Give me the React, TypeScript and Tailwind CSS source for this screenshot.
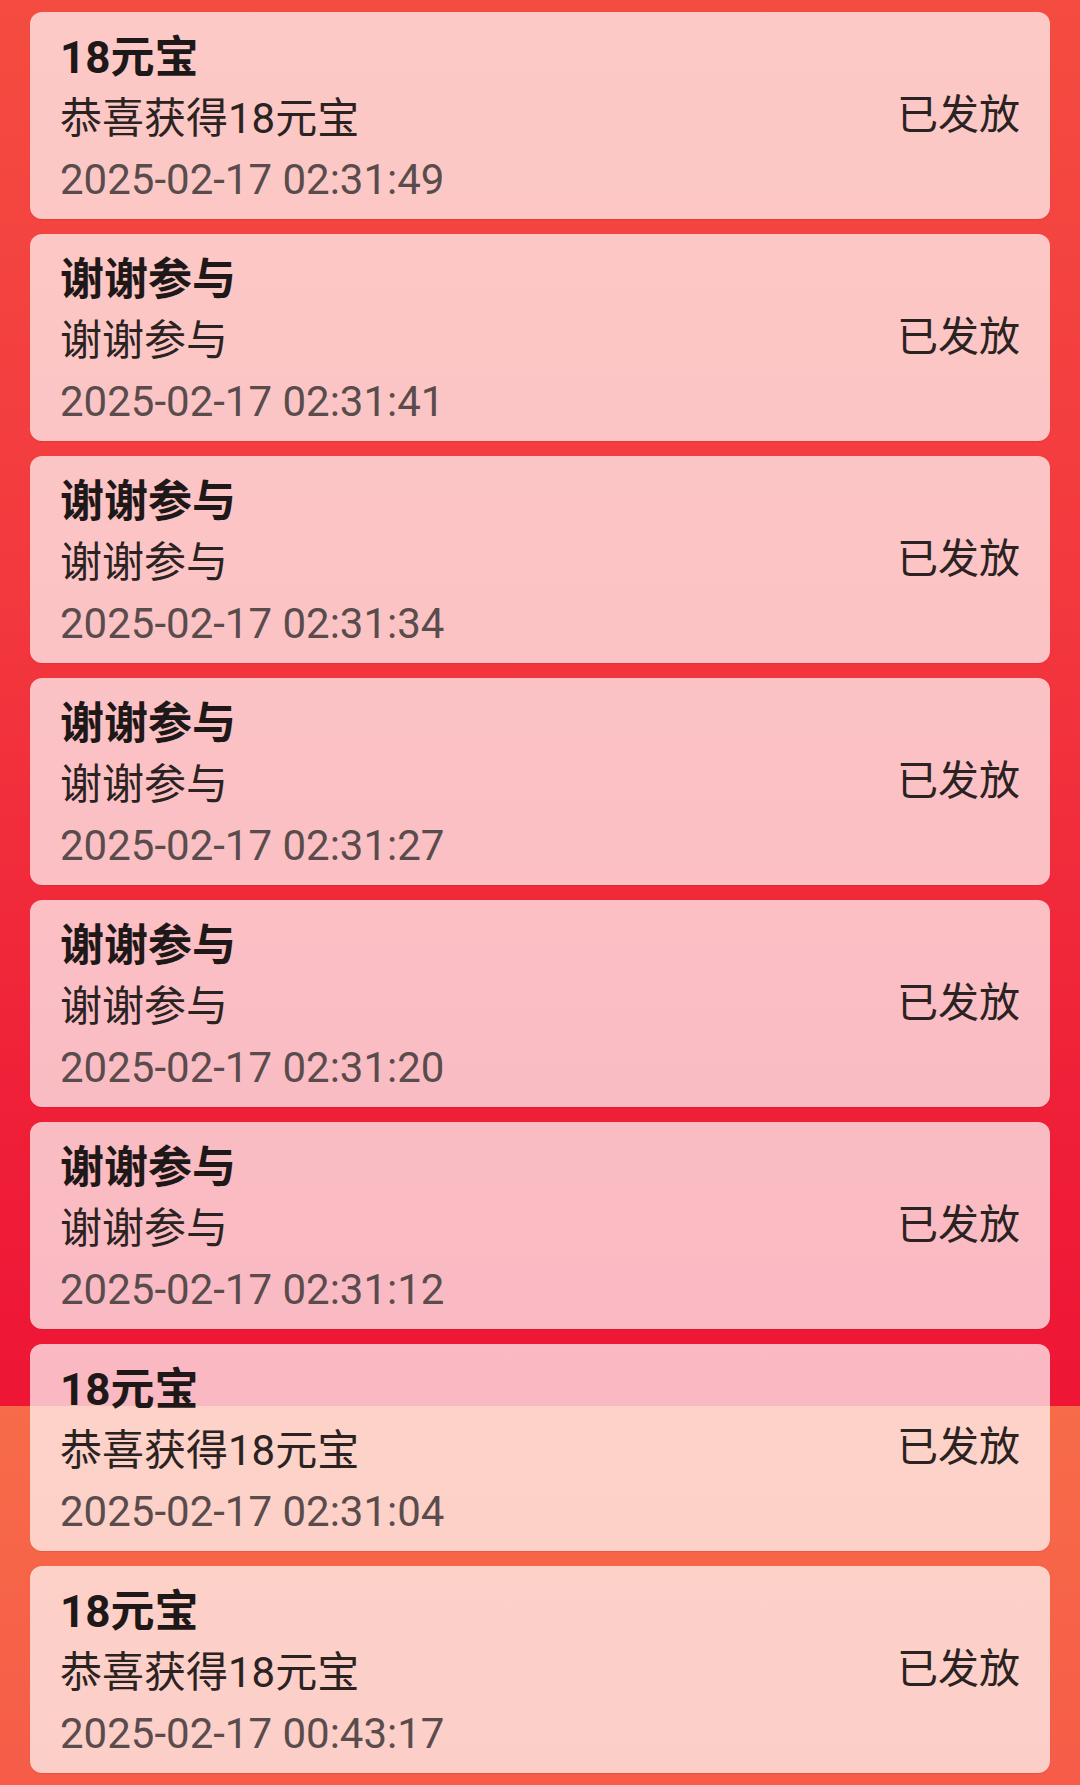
import React from "react";

type Item = { title: string; desc: string; time: string };

const items: Item[] = [
  { title: "18元宝", desc: "恭喜获得18元宝", time: "2025-02-17 02:31:49" },
  { title: "谢谢参与", desc: "谢谢参与", time: "2025-02-17 02:31:41" },
  { title: "谢谢参与", desc: "谢谢参与", time: "2025-02-17 02:31:34" },
  { title: "谢谢参与", desc: "谢谢参与", time: "2025-02-17 02:31:27" },
  { title: "谢谢参与", desc: "谢谢参与", time: "2025-02-17 02:31:20" },
  { title: "谢谢参与", desc: "谢谢参与", time: "2025-02-17 02:31:12" },
  { title: "18元宝", desc: "恭喜获得18元宝", time: "2025-02-17 02:31:04" },
  { title: "18元宝", desc: "恭喜获得18元宝", time: "2025-02-17 00:43:17" },
];

export default function App() {
  return (
    <div
      className="h-[1785px] w-[1080px] overflow-hidden bg-[linear-gradient(to_bottom,#f44c40_0px,#f3383e_600px,#ef2038_1100px,#ee1535_1406px,#f76b48_1406px,#f65c48_1785px)] px-[30px] pt-[12px] font-['Roboto','Noto_Sans_CJK_SC',sans-serif]"
    >
      <div className="flex flex-col gap-[15px]">
        {items.map((it, i) => (
          <div
            key={i}
            className="flex h-[207px] items-center justify-between rounded-[12px] bg-white/70 pl-[30px] pr-[30px] shadow-[0_1px_1px_rgba(120,20,20,0.12)]"
          >
            <div className="flex flex-col pt-[6px]">
              <div className="text-[44px] font-bold leading-[60px] text-[#1f1818]">{it.title}</div>
              <div className="text-[42px] leading-[61px] text-[#2b2222]">{it.desc}</div>
              <div className="text-[42px] leading-[61px] text-[#5a4c4c]">{it.time}</div>
            </div>
            <div className="text-[41px] leading-[61px] text-[#2b2222]">已发放</div>
          </div>
        ))}
      </div>
    </div>
  );
}
